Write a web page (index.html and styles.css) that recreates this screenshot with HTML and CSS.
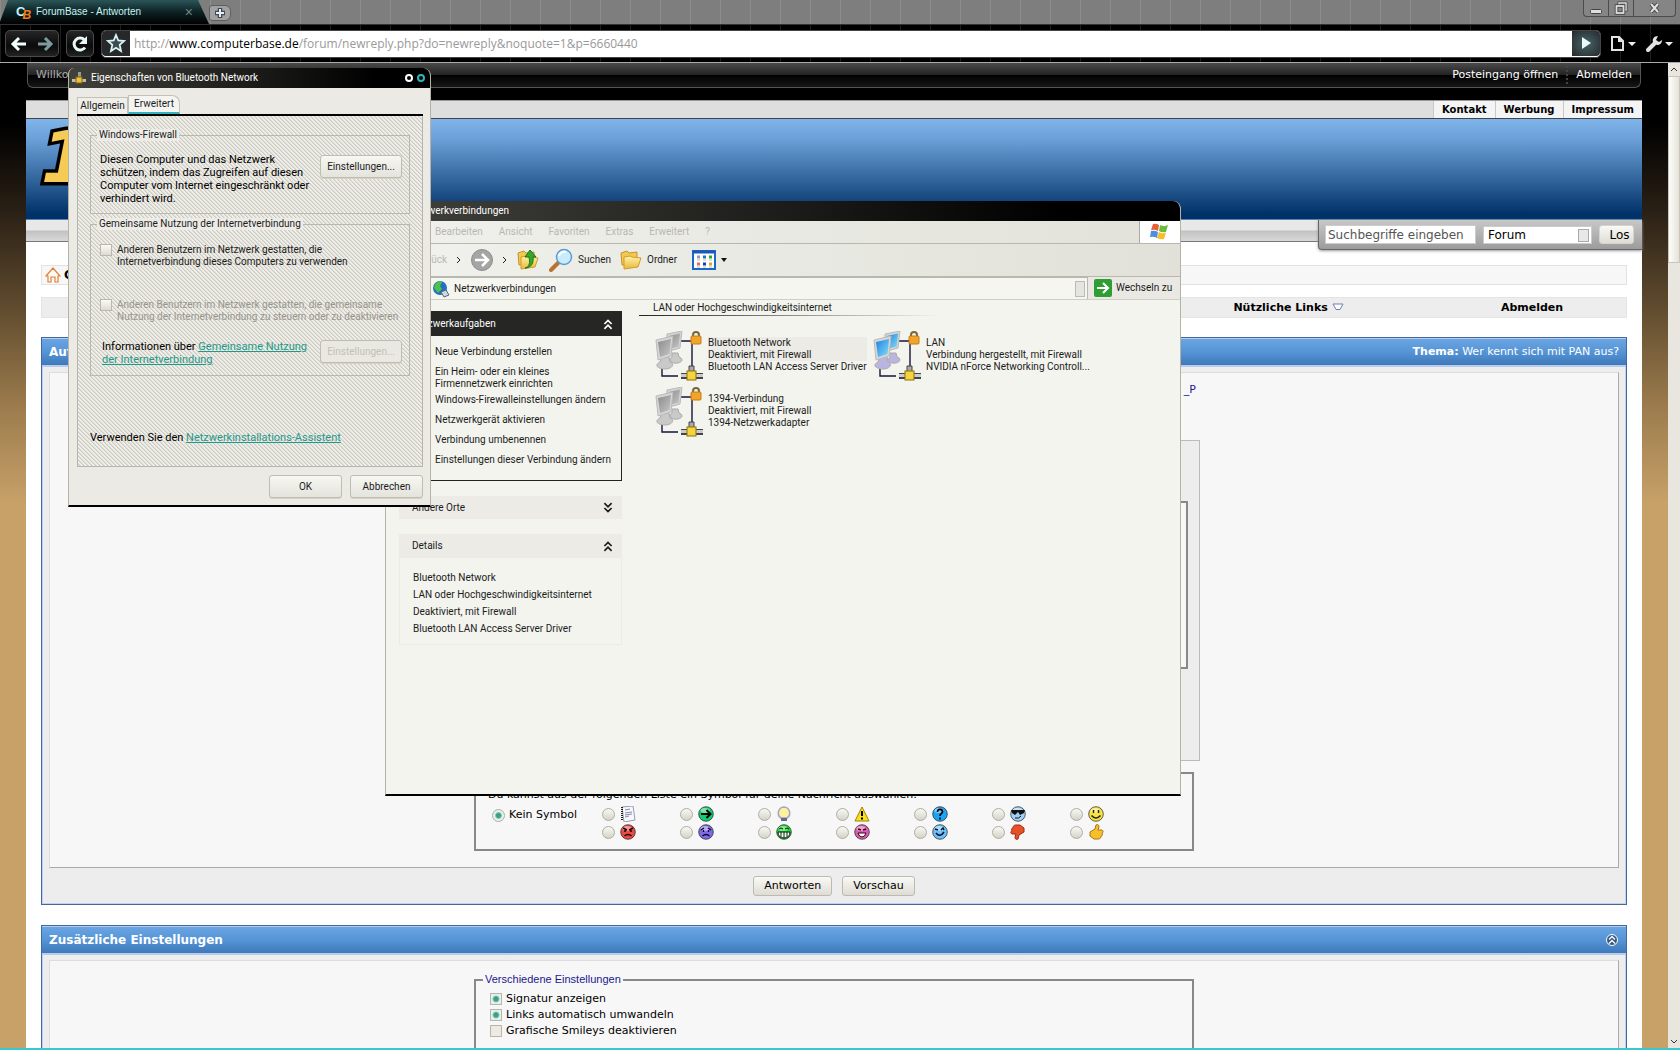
FILE: index.html
```html
<!DOCTYPE html>
<html lang="de">
<head>
<meta charset="utf-8">
<title>ForumBase - Antworten</title>
<link rel="stylesheet" href="styles.css">
</head>
<body>
<svg class="defs" width="0" height="0" aria-hidden="true">
  <defs>
    <linearGradient id="gray" x1="0" y1="0" x2="1" y2="1"><stop offset="0" stop-color="#8c8c8c"/><stop offset="1" stop-color="#c6c6c6"/></linearGradient>
    <linearGradient id="blue" x1="0" y1="0" x2="1" y2="1"><stop offset="0" stop-color="#1f7fe0"/><stop offset="1" stop-color="#7fe0fb"/></linearGradient>
    <linearGradient id="gold" x1="0" y1="0" x2="0" y2="1"><stop offset="0" stop-color="#fff3a8"/><stop offset="1" stop-color="#e9b93a"/></linearGradient>
    <symbol id="net" viewBox="0 0 48 52">
      <path d="M26 10h11v25M7 38v7h16" fill="none" stroke="#14143c" stroke-width="1.400"/>
      <path d="M17 22h6l1 4c4 1 4 5-1 6-7 1-10-3-6-6z" class="foot"/>
      <path d="M12 3l15-3-2 17-14 4z" fill="#d2d2d2" stroke="#bbb"/>
      <path d="M14 5l11-2.500-1.500 13L13 18z" class="screen"/>
      <path d="M7 26h7l1 5c4 1 4 6-4 7-9 0-12-4-6-7z" class="foot"/>
      <path d="M1 9l17-4-2 20-13 4z" fill="#d6d6d6" stroke="#bbb"/>
      <path d="M3 11l13-3-1.500 15L5 26z" class="screen"/>
      <path d="M38 6V4c0-4 6-4 6 0v2" fill="none" stroke="#77683c" stroke-width="2"/>
      <rect x="36" y="5" width="10" height="8" rx="1" fill="#f0a429" stroke="#c77a17"/>
      <path d="M26 42h22v6H26z" fill="#444"/><path d="M26 43h22v3H26z" fill="#ccc"/>
      <path d="M34 35h5v8h-5z" fill="#aaa" stroke="#444"/>
      <rect x="32" y="40" width="9" height="9" fill="#f6d43c" stroke="#8b7014"/>
    </symbol>
    <symbol id="face" viewBox="0 0 16 16"><circle cx="8" cy="8" r="7.300" stroke="#222" stroke-opacity=".7"/><ellipse cx="7" cy="4.500" rx="4.500" ry="2.500" fill="#fff" opacity=".45"/></symbol>
    <symbol id="up" viewBox="0 0 10 10"><path d="M2 5l3-3 3 3M2 9l3-3 3 3" fill="none" stroke="currentColor" stroke-width="1.400"/></symbol>
    <symbol id="folder" viewBox="0 0 22 22"><path d="M1 4l6-2 2 2 8-1v13H2z" fill="#f2c94e" stroke="#c6922a"/><path d="M4 20V8l6-1 2 1 9 1-3 9z" fill="url(#gold)" stroke="#cf9c2d"/></symbol>
    <symbol id="thumb" viewBox="0 0 16 16"><path d="M2 8l5-3 1-4c2-1 3 0 3 2l-1 3h4c2 1 1 3 0 3 1 2 0 3-1 3 0 2-1 3-3 3H6L2 12z"/></symbol>
  </defs>
</svg>
<div class="browser">
  <header class="chrome">
    <div class="tabstrip">
      <div class="tab">
        <span class="favicon"><b>C</b><b class="fav-b">B</b></span>
        <span class="tab-title">ForumBase - Antworten</span>
        <button class="tab-close" aria-label="Tab schließen">×</button>
      </div>
      <button class="newtab" aria-label="Neuer Tab"><svg width="12" height="12" viewBox="0 0 12 12"><path d="M6 1v10M1 6h10" stroke="#3f4a58" stroke-width="4.500"/><path d="M6 2v8M2 6h8" stroke="#e6edf5" stroke-width="2"/></svg></button>
      <div class="wincontrols">
        <button aria-label="Minimieren"><svg width="14" height="14"><rect x="1.500" y="8.500" width="11" height="4" rx="1" fill="#ddd" stroke="#444"/></svg></button>
        <button aria-label="Wiederherstellen"><svg width="14" height="14" fill="none"><path d="M5 4V2h7v7h-2" stroke="#444" stroke-width="3"/><path d="M5 4V2h7v7h-2" stroke="#ddd" stroke-width="1.500"/><rect x="2.500" y="5" width="7" height="7" stroke="#444" stroke-width="3.500"/><rect x="2.500" y="5" width="7" height="7" stroke="#ddd" stroke-width="1.800"/></svg></button>
        <button class="wc-close" aria-label="Schließen"><svg width="14" height="14"><path d="M3 3l7 8M10 3l-7 8" stroke="#444" stroke-width="4"/><path d="M3 3l7 8M10 3l-7 8" stroke="#e2e2e2" stroke-width="2"/></svg></button>
      </div>
    </div>
    <div class="toolbar">
      <div class="navpair">
        <button aria-label="Zurück"><svg width="18" height="18" viewBox="0 0 18 18"><path d="M16 9H4M9 3L3 9l6 6" fill="none" stroke="#f2ffff" stroke-width="3"/></svg></button>
        <button aria-label="Vor"><svg width="18" height="18" viewBox="0 0 18 18"><path d="M2 9h12M9 3l6 6-6 6" fill="none" stroke="#7c9c9f" stroke-width="3"/></svg></button>
      </div>
      <button class="navbtn" aria-label="Neu laden"><svg width="18" height="18" viewBox="0 0 18 18"><path d="M14 12.500A6 6 0 1 1 13.500 5" fill="none" stroke="#eaf7f7" stroke-width="3"/><path d="M16 1v8H8z" fill="#eaf7f7"/></svg></button>
      <div class="urlbar">
        <button class="navbtn star" aria-label="Lesezeichen"><svg width="20" height="20" viewBox="0 0 20 20"><path d="M10 2l2.300 5.500 5.700.5-4.300 3.800L15 18l-5-3.200L5 18l1.300-6.200L2 8l5.700-.5z" fill="#3b4b50" stroke="#d7f4f7" stroke-width="1.800"/></svg></button>
        <div class="url" role="textbox" aria-label="Adresse">http://<b>www.computerbase.de</b>/forum/newreply.php?do=newreply&amp;noquote=1&amp;p=6660440</div>
        <button class="navbtn go" aria-label="Los"><svg width="12" height="14"><path d="M2 1l9 6-9 6z" fill="#eafcfc"/></svg></button>
      </div>
      <button class="menu-btn" aria-label="Seite"><svg width="26" height="18" viewBox="0 0 26 18"><path d="M2 2h7l4 4v9H2zM9 2v4h4" fill="none" stroke="#e4e4e4" stroke-width="2"/><path d="M18 7h8l-4 4z" fill="#eee"/></svg></button>
      <button class="menu-btn" aria-label="Werkzeuge"><svg width="28" height="18" viewBox="0 0 28 18"><path d="M3 15l7-7" stroke="#e4e4e4" stroke-width="4" stroke-linecap="round"/><path d="M13 1c-4 0-6 3-5 6l4 3c3 0 5-2 5-5l-3 2-3-2z" fill="#e4e4e4"/><path d="M20 7h8l-4 4z" fill="#eee"/></svg></button>
    </div>
  </header>
  <div class="viewport">
    <main class="page">
      <div class="userbar"><span class="welcome">Willkommen</span><a href="#">Posteingang öffnen</a><i class="dots"></i><a href="#">Abmelden</a></div>
      <div class="site">
        <nav class="metalinks"><a href="#">Kontakt</a><a href="#">Werbung</a><a href="#">Impressum</a></nav>
        <div class="banner"><span class="logo">1</span></div>
        <div class="subbar">
          <form class="search">
            <input type="text" class="query" value="Suchbegriffe eingeben" aria-label="Suchbegriffe">
            <span class="selwrap"><select aria-label="Bereich"><option>Forum</option></select></span>
            <button type="button" class="btn los">Los</button>
          </form>
        </div>
        <div class="content">
          <div class="crumbs"><svg width="16" height="16" viewBox="0 0 16 16"><path d="M1 9l7-8 7 8h-2v6h-3v-5H6v5H3V9z" fill="#fffaf0" stroke="#e0803c" stroke-width="1.200"/></svg><b>ComputerBase</b></div>
          <nav class="forumnav">
            <a href="#">Nützliche Links <svg width="12" height="8" viewBox="0 0 12 8"><path d="M1 1h10L8 6.500H4z" fill="#fff" stroke="#6b7fae"/></svg></a>
            <a href="#">Abmelden</a>
          </nav>
          <section class="panel first">
            <div class="panel-head"><b>Auf Thema antworten</b><span><b>Thema:</b> Wer kennt sich mit PAN aus?</span></div>
            <div class="panel-body">
              <div class="form">
                <div class="userline"><a href="#">_P</a></div>
                <div class="editor"><div class="textarea"></div></div>
                <fieldset class="box symbols" aria-label="Symbole">
                  <p>Du kannst aus der folgenden Liste ein Symbol für deine Nachricht auswählen:</p>
                  <div class="symgrid">
                    <label class="none"><input type="radio" name="s" checked>Kein Symbol</label>
                    <label><input type="radio" name="s"><svg width="16" height="16" viewBox="0 0 16 16"><path d="M2 1l11-1 2 14-11 2z" fill="#f6f8ff" stroke="#99a"/><path d="M2 1v14" stroke="#222" stroke-width="2" stroke-dasharray="1 1"/><path d="M5 4l5-1M5 7l7-1M5 9l7-1M5 11l4-1" stroke="#88a"/></svg></label>
                    <label><input type="radio" name="s"><svg width="16" height="16" viewBox="0 0 16 16"><use href="#face" fill="#10cf72"/><path d="M3 8h9M8.500 4l4 4-4 4" fill="none" stroke="#000" stroke-width="2"/></svg></label>
                    <label><input type="radio" name="s"><svg width="16" height="16" viewBox="0 0 16 16"><path d="M8 1a6 6 0 0 0-3 11h6A6 6 0 0 0 8 1z" fill="#fdf39a" stroke="#a5a5c8" stroke-width="1.600"/><path d="M5 12h6v3H5z" fill="#666a90"/></svg></label>
                    <label><input type="radio" name="s"><svg width="16" height="16" viewBox="0 0 16 16"><path d="M8 1l7 14H1z" fill="#f9e21c" stroke="#a87c00"/><path d="M8 5v5M8 11.500v2" stroke="#000" stroke-width="2"/></svg></label>
                    <label><input type="radio" name="s"><svg width="16" height="16" viewBox="0 0 16 16"><use href="#face" fill="#19a5f5"/><path d="M5.500 6c0-4 5-3 5-.5C10.500 8 8 7 8 10M8 11.500v2" fill="none" stroke="#000" stroke-width="1.700"/></svg></label>
                    <label><input type="radio" name="s"><svg width="16" height="16" viewBox="0 0 16 16"><use href="#face" fill="#9fd0f8"/><path d="M1 4h14l-1 3-4 2-2-3-3 3-3-2z" fill="#111"/><path d="M5 12q4 1 6-2" fill="none" stroke="#111"/></svg></label>
                    <label><input type="radio" name="s"><svg width="16" height="16" viewBox="0 0 16 16"><use href="#face" fill="#f8e23e"/><path d="M5.500 4v3M10.500 4v3M3.500 9.500q4.500 5 9 0" fill="none" stroke="#222" stroke-width="1.500"/></svg></label>
                    <label><input type="radio" name="s"><svg width="16" height="16" viewBox="0 0 16 16"><use href="#face" fill="#e64a45"/><path d="M3 4l4 2M13 4L9 6M5 6v2M11 6v2M4.500 12q3.500-3 7 0" fill="none" stroke="#200" stroke-width="1.400"/></svg></label>
                    <label><input type="radio" name="s"><svg width="16" height="16" viewBox="0 0 16 16"><use href="#face" fill="#7d6be6"/><path d="M6 4L3 6M10 4l3 2M5.500 6v2M10.500 6v2M4.500 12q3.500-3 7 0" fill="none" stroke="#102" stroke-width="1.300"/></svg></label>
                    <label><input type="radio" name="s"><svg width="16" height="16" viewBox="0 0 16 16"><use href="#face" fill="#27d83e"/><path d="M3 5q2-2 4 0M9 5q2-2 4 0" fill="none" stroke="#020"/><path d="M2 8h12q0 6-6 6T2 8z" fill="#fff" stroke="#020"/><path d="M5 8v5M8 8v6M11 8v5" stroke="#020"/></svg></label>
                    <label><input type="radio" name="s"><svg width="16" height="16" viewBox="0 0 16 16"><use href="#face" fill="#dc5cb4"/><path d="M4 5l3 1M12 5L9 6" stroke="#301" stroke-width="1.400"/><path d="M4 9h8q-1 4-4 4t-4-4z" fill="#fff" stroke="#301"/></svg></label>
                    <label><input type="radio" name="s"><svg width="16" height="16" viewBox="0 0 16 16"><use href="#face" fill="#6ec0f6"/><path d="M3 5l3 1M9 6l2-2 1 2M4 9q4 5 8-1" fill="none" stroke="#013" stroke-width="1.500"/></svg></label>
                    <label><input type="radio" name="s"><svg width="16" height="16" viewBox="0 0 16 16"><use href="#thumb" fill="#e8502a" stroke="#a02b10" transform="rotate(180 8 8)"/></svg></label>
                    <label><input type="radio" name="s"><svg width="16" height="16" viewBox="0 0 16 16"><use href="#thumb" fill="#f6c02c" stroke="#a87410"/></svg></label>
                  </div>
                </fieldset>
              </div>
            </div>
            <div class="actions"><button class="btn">Antworten</button><button class="btn">Vorschau</button></div>
          </section>
          <section class="panel">
            <div class="panel-head"><b>Zusätzliche Einstellungen</b><button class="collapse" aria-label="Einklappen"><svg width="12" height="12"><circle cx="6" cy="6" r="5.500" fill="#345684" stroke="#fff"/><use href="#up" x="1" y="0" width="10" height="11"/></svg></button></div>
            <div class="panel-body">
              <div class="form">
                <fieldset class="box options">
                  <legend>Verschiedene Einstellungen</legend>
                  <label><input type="checkbox" checked>Signatur anzeigen</label>
                  <label><input type="checkbox" checked>Links automatisch umwandeln</label>
                  <label><input type="checkbox">Grafische Smileys deaktivieren</label>
                </fieldset>
              </div>
            </div>
          </section>
        </div>
      </div>
    </main>
    <div class="scrollbar"><svg width="12" height="13"><path d="M3 8l3-3 3 3" fill="none" stroke="#333"/></svg><div class="thumb"></div><svg width="12" height="13"><path d="M3 5l3 3 3-3" fill="none" stroke="#333"/></svg></div>
  </div>
  <div class="taskline"></div>
</div>

<div class="win network">
  <div class="titlebar">Netzwerkverbindungen</div>
  <div class="menubar"><span>Bearbeiten</span><span>Ansicht</span><span>Favoriten</span><span>Extras</span><span>Erweitert</span><span>?</span>
    <div class="flag"><svg width="20" height="18" viewBox="0 0 20 18"><path d="M3 1q3-1 6 1L8 8Q5 6 1 7z" fill="#e8603a"/><path d="M10 2q4 2 8 0l-2 7q-4 1-7-1z" fill="#6dbb3c"/><path d="M1 8q4-1 7 1l-1 6q-3-2-7-1z" fill="#4a90dc"/><path d="M9 9q3 2 7 1l-2 6q-4 1-7-1z" fill="#f5c02c"/></svg></div>
  </div>
  <div class="tools">
    <span class="disabled">Zurück</span><svg class="chev" width="6" height="8"><path d="M1 1l3 3-3 3" fill="none" stroke="#222"/></svg>
    <svg class="fwd" width="22" height="22"><circle cx="11" cy="11" r="10.500" fill="#a5a5a3" stroke="#8d8d8b"/><path d="M4 11h12M11 5l6 6-6 6" fill="none" stroke="#fff" stroke-width="2.500"/></svg>
    <svg class="chev" width="6" height="8"><path d="M1 1l3 3-3 3" fill="none" stroke="#222"/></svg>
    <svg class="up" width="22" height="22" viewBox="0 0 22 22"><use href="#folder"/><path d="M8 19c5-1 5-6 4-11H8l5-7 6 7h-3c1 6-2 11-8 11z" fill="#37a82e" stroke="#1d7516"/></svg>
    <svg class="find" width="24" height="24"><path d="M2 22l8-8" stroke="#b8732f" stroke-width="4" stroke-linecap="round"/><circle cx="15" cy="9" r="7.500" fill="#c8ecfb" stroke="#5d9bd4" stroke-width="1.500"/><path d="M10 8q2-5 7-4" stroke="#fff" stroke-width="2" fill="none"/></svg>
    <span class="t-find">Suchen</span>
    <svg class="t-fold" width="22" height="22"><use href="#folder" width="22" height="22"/></svg>
    <span class="t-order">Ordner</span>
    <svg class="t-view" width="24" height="20"><rect x="1" y="1" width="22" height="18" fill="#fff" stroke="#1c68c8" stroke-width="2"/><path d="M1 2h22" stroke="#1c58b8" stroke-width="3"/><path d="M5 7h3" stroke="#99a" stroke-width="3"/><path d="M11 7h3" stroke="#27b" stroke-width="3"/><path d="M17 7h3" stroke="#2a3" stroke-width="3"/><path d="M5 14h3" stroke="#e86a5a" stroke-width="3"/><path d="M11 14h3" stroke="#14a" stroke-width="3"/><path d="M17 14h3" stroke="#ca3" stroke-width="3"/><path d="M5 10h3M11 10h3M17 10h3M5 17h3M11 17h3M17 17h3" stroke="#bbb"/></svg>
    <svg class="caret" width="8" height="5"><path d="M1 0h6L4 4z" fill="#111"/></svg>
  </div>
  <div class="address">
    <div class="addrfield"><svg width="18" height="18" viewBox="0 0 18 18"><circle cx="8" cy="8" r="7" fill="#2270c0"/><path d="M3 4q4-4 7-2l-2 4 2 3-4 4-4-5z" fill="#4fc04a"/><path d="M9 12l5-2 3 5-5 2z" fill="#cfd8e8" stroke="#567"/></svg><span>Netzwerkverbindungen</span><i class="grip"></i></div>
    <button class="goto"><svg width="18" height="18"><rect width="18" height="18" rx="2" fill="#2f9e35"/><path d="M3 9h11M9 4l5 5-5 5" fill="none" stroke="#fff" stroke-width="2"/></svg>Wechseln zu</button>
  </div>
  <div class="explorer">
    <aside class="tasks">
      <div class="group dark">
        <h3>Netzwerkaufgaben<svg width="12" height="12"><use href="#up" width="12" height="12"/></svg></h3>
        <ul><li>Neue Verbindung erstellen</li><li>Ein Heim- oder ein kleines<br>Firmennetzwerk einrichten</li><li>Windows-Firewalleinstellungen ändern</li><li>Netzwerkgerät aktivieren</li><li>Verbindung umbenennen</li><li>Einstellungen dieser Verbindung ändern</li></ul>
      </div>
      <div class="group"><h3>Andere Orte<svg class="flip" width="12" height="12"><use href="#up" width="12" height="12"/></svg></h3></div>
      <div class="group details"><h3>Details<svg width="12" height="12"><use href="#up" width="12" height="12"/></svg></h3>
        <ul><li>Bluetooth Network</li><li>LAN oder Hochgeschwindigkeitsinternet</li><li>Deaktiviert, mit Firewall</li><li>Bluetooth LAN Access Server Driver</li></ul>
      </div>
    </aside>
    <div class="conns">
      <h2>LAN oder Hochgeschwindigkeitsinternet</h2>
      <div class="conngrid">
        <div class="conn sel"><svg width="48" height="52"><use href="#net"/></svg><p>Bluetooth Network<br>Deaktiviert, mit Firewall<br>Bluetooth LAN Access Server Driver</p></div>
        <div class="conn on"><svg width="48" height="52"><use href="#net"/></svg><p>LAN<br>Verbindung hergestellt, mit Firewall<br>NVIDIA nForce Networking Controll...</p></div>
        <div class="conn"><svg width="48" height="52"><use href="#net"/></svg><p>1394-Verbindung<br>Deaktiviert, mit Firewall<br>1394-Netzwerkadapter</p></div>
      </div>
    </div>
  </div>
</div>

<div class="win dialog" role="dialog" aria-label="Eigenschaften von Bluetooth Network">
  <div class="titlebar"><svg width="16" height="16"><path d="M1 9h14v3H1z" fill="#bbb"/><path d="M7 2h3v7H7z" fill="#999"/><rect x="5" y="7" width="6" height="6" fill="#eec22e" stroke="#806510"/></svg><span>Eigenschaften von Bluetooth Network</span><i class="ring"></i><i class="ring teal"></i></div>
  <div class="dlg-body">
    <div class="tabs"><button>Allgemein</button><button class="active">Erweitert</button></div>
    <div class="sheet">
      <fieldset class="fs one"><legend>Windows-Firewall</legend>
        <p>Diesen Computer und das Netzwerk schützen, indem das Zugreifen auf diesen Computer vom Internet eingeschränkt oder verhindert wird.</p>
        <button class="xp">Einstellungen...</button>
      </fieldset>
      <fieldset class="fs two"><legend>Gemeinsame Nutzung der Internetverbindung</legend>
        <label><input type="checkbox"><span>Anderen Benutzern im Netzwerk gestatten, die<br>Internetverbindung dieses Computers zu verwenden</span></label>
        <label class="off"><input type="checkbox" disabled><span>Anderen Benutzern im Netzwerk gestatten, die gemeinsame<br>Nutzung der Internetverbindung zu steuern oder zu deaktivieren</span></label>
        <div class="inforow"><p>Informationen über <a href="#">Gemeinsame Nutzung<br>der Internetverbindung</a></p><button class="xp" disabled>Einstellungen...</button></div>
      </fieldset>
      <p class="assist">Verwenden Sie den <a href="#">Netzwerkinstallations-Assistent</a></p>
    </div>
    <div class="dlg-actions"><button class="xp">OK</button><button class="xp">Abbrechen</button></div>
  </div>
</div>
</body>
</html>
```
FILE: styles.css
```css
* { box-sizing: border-box; }
body { margin: 0; overflow: hidden; font: 11px/14px "DejaVu Sans", sans-serif; color: #000; }
button, input, select { font: inherit; color: inherit; margin: 0; }
button { padding: 0; border: 0; background: none; }
a { color: inherit; text-decoration: none; }
p, ul, h2, h3, fieldset { margin: 0; padding: 0; }
svg { flex: none; }
.defs { position: absolute; }
.browser { height: 100vh; display: flex; flex-direction: column; }

/* browser chrome */
.chrome { flex: none; color: #fff; background: #000; border-bottom: 1px solid #aaa; font-family: "Liberation Sans", sans-serif; }
.tabstrip { height: 25px; display: flex; border-bottom: 1px solid #333; background: linear-gradient(90deg, #8c8c8c 1px, transparent 1px) 0 0 / 30px 100%, #7e7e7e; }
.tab { width: 209px; padding: 0 16px; display: flex; align-items: center; gap: 4px; font-size: 10px; color: #c6f2f2; background: linear-gradient(#2b5558, #0d2224 50%, #000); clip-path: polygon(0 90%, 8px 0, 198px 0, 209px 100%, 0 100%); }
.favicon { width: 16px; font-size: 13px; line-height: 12px; display: flex; align-items: center; }
.fav-b { color: #f47a20; padding-top: 6px; margin-left: -3px; font-size: 12px; font-style: italic; }
.tab-title { flex: 1; }
.tab-close { color: #6c8789; font-size: 14px; }
.newtab { width: 22px; height: 16px; margin-top: 5px; display: grid; place-items: center; background: #a2a2a2; border: 1px solid #5e5e5e; border-radius: 3px 6px 6px 3px; }
.wincontrols { margin: 0 4px 0 auto; height: 17px; display: flex; border: 1px solid #4c4c4c; border-top: 0; border-radius: 0 0 4px 4px; background: #858585; }
.wincontrols button { width: 25px; display: grid; place-items: center; border-right: 1px solid #4c4c4c; }
.wincontrols .wc-close { width: 41px; border: 0; }
.toolbar { height: 37px; padding: 5px 7px 5px 5px; display: flex; align-items: center; gap: 7px; background: linear-gradient(90deg, #1d1d1d 1px, transparent 1px) 0 0 / 30px 100%, #000; }
.navpair, .navbtn { height: 27px; border: 1px solid #4b4b4b; border-radius: 5px; background: linear-gradient(#262626, #0a0a0a 60%, #222); }
.navpair { width: 54px; display: flex; }
.navpair button { flex: 1; display: grid; place-items: center; }
.navbtn { width: 28px; display: grid; place-items: center; }
.urlbar { flex: 1; display: flex; background: #fff; border: 1px solid #444; border-radius: 5px; }
.urlbar .navbtn { height: 25px; border: 0; border-radius: 4px 0 0 4px; background: #26282a; }
.urlbar .go { border-radius: 0 4px 4px 0; background: radial-gradient(#47666a, #26282a); }
.url { flex: 1; padding: 0 4px; font: 12px/26px "Open Sans", sans-serif; color: #999; }
.url b { font-weight: 400; color: #000; }
.menu-btn { margin-left: 2px; display: grid; }

/* page */
.viewport { flex: 1; min-height: 0; display: flex; overflow: hidden; }
.page { flex: 1; padding: 0 26px; overflow: hidden; background: linear-gradient(#000 60px, #2b2116 150px, #5d492d 240px, #9a7a4c 340px, #c7a168 440px); }
.userbar { height: 25px; margin: 0 1px; padding: 0 8px; display: flex; align-items: center; gap: 8px; color: #fff; border: 1px solid #555; border-top: 0; border-radius: 0 0 6px 6px; background: linear-gradient(#4a4a4a, #222 12px, #000 12px, #161616); }
.welcome { width: 34px; margin-right: auto; overflow: hidden; color: #aaa; }
.dots { height: 18px; border-left: 2px dotted #444; }
.site { margin-top: 12px; background: #fff; border-top: 1px solid #999; }
.metalinks { height: 18px; display: flex; justify-content: flex-end; background: #dedede; border-bottom: 1px solid #444; }
.metalinks a { padding: 2px 8px; font-weight: 700; font-size: 10px; background: #f4f4f4; border-left: 1px solid #c8c8c8; }
.banner { height: 101px; padding: 0 15px; background: linear-gradient(#7fb5ea, #6ba0d8 20%, #003268 95%); border-bottom: 1px solid #5a83b0; }
.logo { font: italic 700 72px/76px "DejaVu Sans", sans-serif; color: #f6cb55; -webkit-text-stroke: 7px #000; paint-order: stroke fill; }
.subbar { height: 22px; display: flex; justify-content: flex-end; background: linear-gradient(#e8e8e8 10px, #c2c2c2 11px, #d8d8d8); border-bottom: 1px solid #777; }
.search { width: 324px; height: 30px; padding: 5px 8px 5px 6px; display: flex; align-items: center; gap: 7px; background: linear-gradient(#c8c8c8, #9c9c9c); border: solid #666; border-width: 0 0 1px 1px; border-radius: 0 0 0 4px; box-shadow: 0 1px 3px #999; }
.query { width: 151px; height: 19px; padding: 0 2px; border: 1px solid #ccc; font-size: 12px; color: #555; background: #fff; }
.selwrap { flex: 1; position: relative; display: flex; }
.selwrap::after { content: ""; position: absolute; right: 3px; top: 3px; width: 9px; height: 11px; background: #e8e8e8; border: 1px solid #aaa; }
.search select { width: 100%; height: 18px; padding: 0 4px; font-size: 12px; background: #fff; border: 1px solid #ccc; appearance: none; }
.btn { height: 20px; padding: 0 10px; border: 1px solid #bdbbaf; border-radius: 3px; background: linear-gradient(#f9f9f6, #dedcd4); color: #000; }
.los { width: 35px; height: 19px; padding: 0 3px 0 9px; font-size: 12px; border-color: #d6d4ca; }
.content { padding: 23px 15px 0; }
.crumbs { height: 20px; padding: 0 3px; display: flex; align-items: center; gap: 3px; font-size: 12px; background: #f7f7f7; border: 1px solid #e2e2e2; }
.forumnav { height: 21px; margin-top: 12px; display: flex; justify-content: flex-end; align-items: center; background: #ededed; border: 1px solid #e4e4e4; font-weight: 700; }
.forumnav a { width: 299px; text-align: center; }
.forumnav a + a { width: 188px; }
.panel { margin-top: 20px; border: 1px solid #41699f; background: #ededed; box-shadow: inset 0 0 0 1px #c3cff0; }
.panel.first { margin-top: 19px; }
.panel-head { height: 29px; padding: 0 7px; display: flex; align-items: center; justify-content: space-between; color: #fff; background: linear-gradient(#6aa5e3, #5594d6 50%, #3e79b9); border: solid #b9cbec; border-width: 1px 0 2px; }
.panel-head > b { font-size: 12px; }
.collapse { display: grid; color: #fff; padding-right: 1px; }
.panel-body { margin: 5px 7px 0; background: #f7f7f7; border: 1px solid #ddd; border-right-color: #aaa; border-bottom-color: #aaa; }
.form { width: 732px; margin: 0 auto; }
.first .form { height: 494px; }
.userline { height: 67px; padding: 10px 4px 0 0; text-align: right; color: #22188f; }
.editor { height: 321px; padding: 60px 11px 0; background: #ededed; border: 1px solid #bbb; }
.textarea { height: 168px; background: #f7f7f7; border: 2px solid #888; }
.box { width: 720px; margin: 0 auto; border: 2px solid #888; }
.symbols { height: 79px; margin-top: 11px; padding: 14px 12px 0; }
.symgrid { padding-top: 3px; display: grid; grid-template-columns: 114px repeat(6, 78px) 60px; grid-auto-rows: 18px; }
.symgrid label { display: flex; align-items: center; gap: 5px; }
.symgrid .none { grid-row: span 2; align-self: start; gap: 4px; padding: 3px 0 0 4px; }
.symgrid input { appearance: none; width: 13px; height: 13px; border: 1px solid #b0aea2; border-radius: 50%; background: linear-gradient(#f8f8f4, #d5d3c8); }
.symgrid input:checked, .options input:checked { background: radial-gradient(#3b9f86 2px, #e4f2ee 4px); }
.actions { height: 36px; display: flex; justify-content: center; align-items: center; gap: 10px; }
.options { margin-top: 12px; height: 140px; padding: 5px 14px; }
.options legend { padding: 0 2px; margin-left: -7px; font: 11px/13px "Liberation Sans", sans-serif; color: #22188f; }
.options label { height: 16px; display: flex; align-items: center; gap: 4px; }
.options input { appearance: none; width: 12px; height: 12px; border: 1px solid #b8b5aa; background: #eceae2; }
.scrollbar { width: 12px; display: flex; flex-direction: column; background: #e8e6df; }
.thumb { height: 187px; margin-bottom: auto; background: linear-gradient(90deg, #fdfdfb, #e4e2d8); border: 1px solid #c9c6ba; }
.taskline { height: 2px; background: #3cc6d2; }

/* desktop windows */
.win { position: absolute; display: flex; flex-direction: column; font: 10px/12px Roboto, sans-serif; color: #1c1c1c; border: solid #b5b2a6; border-width: 0 1px; border-bottom: 2px solid #000; border-radius: 6px 8px 0 0; overflow: hidden; }
.titlebar { flex: none; height: 20px; display: flex; align-items: center; gap: 4px; color: #fff; background: linear-gradient(90deg, #41413c, #1c1c1a 50%, #000 85%); }
.network { left: 385px; top: 201px; width: 796px; height: 595px; background: #f3f4ee; }
.network .titlebar { padding-left: 21px; }
.menubar { flex: none; height: 23px; display: flex; align-items: center; padding-left: 49px; gap: 16px; color: #b9b8b0; background: linear-gradient(90deg, #f0f0ec, #e2e2da); border-bottom: 1px solid #b9b8ae; }
.flag { width: 41px; height: 22px; margin-left: auto; display: grid; place-items: center; background: #fff; border-left: 1px solid #aaa; }
.tools { flex: none; height: 33px; padding-left: 27px; display: flex; align-items: center; gap: 9px; background: linear-gradient(90deg, #f1f1ed, #e1e1d9); border-bottom: 1px solid #b9b8ae; }
.disabled { width: 34px; color: #b9b8b0; text-align: right; }
.find { margin-left: 1px; }
.t-find, .t-order { margin-left: -4px; }
.t-view { margin-left: 6px; }
.caret { margin-left: -5px; }
.address { flex: none; height: 23px; display: flex; background: #e9e8e2; border-bottom: 1px solid #d0cfc6; }
.addrfield { flex: 1; padding-left: 46px; display: flex; align-items: center; gap: 4px; background: #f5f6f0; border: solid #b9b8ae; border-width: 1px 1px 0 0; }
.grip { width: 10px; height: 16px; margin: 0 2px 0 auto; background: #e4e4e0; border: 1px solid #bbb; }
.goto { width: 92px; padding-left: 6px; display: flex; align-items: center; gap: 4px; }
.explorer { flex: 1; display: flex; }
.tasks { width: 223px; margin: 11px 0 0 13px; }
.group { margin-bottom: 15px; }
.group h3 { height: 23px; padding: 0 8px 0 13px; display: flex; align-items: center; justify-content: space-between; font-size: 10px; font-weight: 400; background: #ecebe6; color: #1c1c1c; }
.group ul { list-style: none; }
.dark { border: 1px solid #222; height: 170px; }
.dark h3 { height: 25px; margin: -1px; background: #262624; color: #fff; }
.dark ul { padding: 11px 0 0 35px; }
.dark li { margin-bottom: 8px; }
.dark li:nth-child(2) { margin-bottom: 4px; }
.flip { transform: rotate(180deg); }
.details ul { height: 88px; padding: 11px 0 0 13px; border: 1px solid #ebeae5; line-height: 17px; }
.conns { flex: 1; padding: 0 0 0 17px; }
.conns h2 { width: 300px; padding: 2px 14px 1px; border-bottom: 1px solid; border-image: linear-gradient(90deg, #222, #f3f4ee) 1; font-size: 10px; font-weight: 400; }
.conngrid { padding: 15px 0 0 16px; display: grid; grid-template-columns: 218px 240px; row-gap: 4px; }
.conn { --screen: url(#gray); --foot: #c9c9c9; display: flex; gap: 5px; }
.conn.on { --screen: url(#blue); --foot: #b9b4e0; }
.conn p { margin: 6px 0 8px; white-space: nowrap; }
.conn.sel p { background: linear-gradient(#ecebe6 24px, transparent 24px); }
.screen { fill: var(--screen); }
.foot { fill: var(--foot); stroke: #aaa; }

/* properties dialog */
.dialog { left: 68px; top: 68px; width: 363px; height: 439px; background: #ebeae5; }
.dialog .titlebar { padding: 0 5px 0 2px; }
.dialog .titlebar span { flex: 1; }
.ring { width: 8px; height: 8px; border: 2px solid #fff; border-radius: 50%; }
.teal { border-color: #2fb3ba; }
.dlg-body { flex: 1; padding: 7px 7px 7px 8px; display: flex; flex-direction: column; }
.tabs { height: 21px; display: flex; align-items: flex-end; border-bottom: 2px solid #000; }
.tabs button { width: 51px; height: 17px; border: 1px solid #c4c2b7; border-bottom: 0; background: #efeee9; }
.tabs .active { width: 52px; height: 19px; border-bottom: 2px solid #2fb3c0; border-radius: 0 8px 0 0; background: #f4f4f0; }
.sheet { flex: 1; padding: 13px 12px 0; border: 1px solid #b7b5a9; border-top: 0; background: linear-gradient(45deg, #cbcac1 12%, #efeee9 13% 49%, #cbcac1 50% 62%, #efeee9 63%) 0 0 / 4px 4px; font-size: 11px; line-height: 13px; }
.fs { border: 1px solid #b9b8ac; display: flex; font-size: 11px; min-width: 0; }
.fs legend { margin-left: -3px; padding: 0 2px; font-size: 10px; line-height: 12px; color: #1c1c1c; background: #ecebe6; }
.fs p { color: #000; white-space: nowrap; }
.fs p a, .assist a { color: #1f9a8a; text-decoration: underline; }
.one { height: 85px; padding: 12px 7px 0 9px; }
.one p { white-space: normal; width: 210px; }
.xp { width: 82px; height: 23px; font-size: 10px; line-height: 12px; border: 1px solid #bfbdb1; border-radius: 3px; background: linear-gradient(#f7f7f3, #e4e3dc); box-shadow: 0 1px 0 #d5d3c8; color: #1c1c1c; }
.xp:disabled { color: #c2c0b8; background: #e9e8e2; }
.one .xp { margin: 2px 0 0 auto; }
.two { margin-top: 4px; height: 158px; padding: 14px 7px 0 9px; flex-direction: column; display: flex; }
.two label { height: 55px; display: flex; gap: 5px; font-size: 10px; line-height: 12px; white-space: nowrap; }
.two .off { height: 41px; color: #98968c; }
.two input { appearance: none; width: 12px; height: 12px; border: 1px solid #bab8ac; background: linear-gradient(#fafaf7, #dddbd2); }
.inforow { display: flex; justify-content: space-between; padding-left: 2px; }
.assist { margin-top: 55px; color: #000; }
.dlg-actions { padding-top: 8px; display: flex; justify-content: flex-end; gap: 8px; }
.dlg-actions .xp { width: 73px; }
```
